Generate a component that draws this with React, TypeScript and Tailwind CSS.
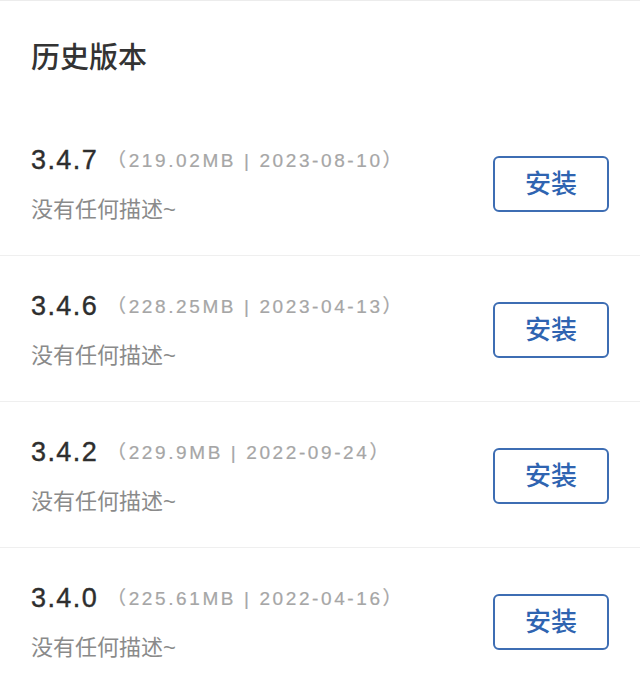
import React from 'react';

const versions = [
  { version: '3.4.7', size: '219.02MB', date: '2023-08-10' },
  { version: '3.4.6', size: '228.25MB', date: '2023-04-13' },
  { version: '3.4.2', size: '229.9MB', date: '2022-09-24' },
  { version: '3.4.0', size: '225.61MB', date: '2022-04-16' },
];

const font = 'font-["Liberation_Sans","Noto_Sans_CJK_SC",sans-serif]';

const App: React.FC = () => {
  return (
    <div className={`min-h-screen bg-white border-t border-[#ececec] ${font}`}>
      <div className="flex h-[109px] items-center px-[31px] pt-[6px]">
        <h1 className="text-[29px] font-medium leading-none text-[#333]">历史版本</h1>
      </div>

      {versions.map((item) => (
        <div
          key={item.version}
          className="flex h-[146px] items-start justify-between border-b border-[#efefef] px-[31px]"
        >
          <div className="pt-[32px]">
            <div className="flex h-[36px] items-center">
              <span className="text-[27px] font-medium leading-none tracking-[1.4px] text-[#2e2e2e] [-webkit-text-stroke:0.4px_#2e2e2e]">
                {item.version}
              </span>
              <span className="ml-[9px] text-[19px] leading-none tracking-[2.6px] text-[#a6a6a6] [-webkit-text-stroke:0.2px_#a6a6a6]">
                （{item.size} | {item.date}）
              </span>
            </div>
            <p className="mt-[14px] h-[36px] text-[22px] leading-[36px] text-[#8a8a8a]">没有任何描述~</p>
          </div>

          <button className="mt-[46px] flex h-[56px] w-[116px] items-center justify-center rounded-[6px] border-2 border-[#3d6db3] text-[26px] font-medium text-[#2f64b1]">
            安装
          </button>
        </div>
      ))}
    </div>
  );
};

export default App;
